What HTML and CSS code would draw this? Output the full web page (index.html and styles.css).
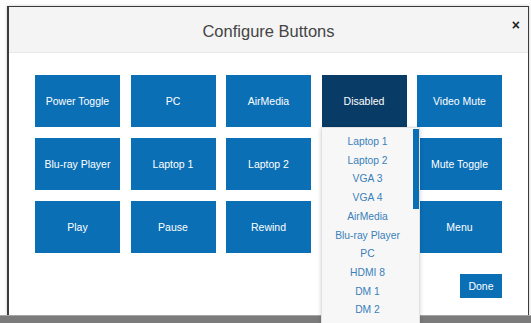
FILE: index.html
```html
<!DOCTYPE html>
<html lang="en">
<head>
  <meta charset="UTF-8" />
  <title>Configure Buttons</title>
  <link rel="stylesheet" href="styles.css">
</head>
<body>
  <div class="page">
    <div class="modal">
      <div class="modal-header">
        <h3>Configure Buttons</h3>
        <span class="close">&times;</span>
      </div>
      <div class="modal-body">
        <div class="grid">
          <div class="btn">Power Toggle</div>
          <div class="btn">PC</div>
          <div class="btn">AirMedia</div>
          <div class="btn dark">Disabled</div>
          <div class="btn">Video Mute</div>
          <div class="btn">Blu-ray Player</div>
          <div class="btn">Laptop 1</div>
          <div class="btn">Laptop 2</div>
          <div class="btn empty"></div>
          <div class="btn">Mute Toggle</div>
          <div class="btn">Play</div>
          <div class="btn">Pause</div>
          <div class="btn">Rewind</div>
          <div class="btn empty"></div>
          <div class="btn">Menu</div>
        </div>
        <div class="actions">
          <div class="done">Done</div>
        </div>
      </div>
    </div>
    <div class="backdrop-bar"></div>

    <div class="dropdown">
      <ul>
        <li>Laptop 1</li>
        <li>Laptop 2</li>
        <li>VGA 3</li>
        <li>VGA 4</li>
        <li>AirMedia</li>
        <li>Blu-ray Player</li>
        <li>PC</li>
        <li>HDMI 8</li>
        <li>DM 1</li>
        <li>DM 2</li>
      </ul>
      <div class="scroll-thumb"></div>
    </div>
  </div>
</body>
</html>
```

FILE: styles.css
```css
* { box-sizing: border-box; }
html, body { margin: 0; height: 100%; }
body { background: #fdfdfd; font-family: "Liberation Sans", Arial, sans-serif; overflow: hidden; }
.page { position: relative; height: 323px; padding: 6px 2px 0 7px; }

.modal { border: 1px solid #3a3a3a; border-left-width: 2px; border-bottom: none; background: #fff; height: 309px; box-shadow: 0 0 3px rgba(0,0,0,0.2); }
.modal-header { position: relative; height: 46px; background: #f4f4f4; border-bottom: 1px solid #e8e8e8; display: flex; align-items: center; justify-content: center; }
.modal-header h3 { margin: 0; font-weight: normal; font-size: 16.5px; color: #444; padding-top: 3px; }
.close { position: absolute; right: 8px; top: 11px; font-size: 14px; font-weight: bold; color: #222; line-height: 14px; }

.modal-body { padding: 22px 0 0 26px; }
.grid { display: grid; grid-template-columns: repeat(5, 85px); grid-auto-rows: 52px; column-gap: 10.5px; row-gap: 11px; }
.btn { background: #0b6fb6; color: #fff; font-size: 10.5px; display: flex; align-items: center; justify-content: center; }
.btn.dark { background: #083b66; }
.btn.empty { background: transparent; }

.actions { width: 467px; display: flex; justify-content: flex-end; margin-top: 21px; }
.done { background: #0b6fb6; color: #fff; font-size: 10.5px; width: 42px; height: 24px; display: flex; align-items: center; justify-content: center; }

.backdrop-bar { position: absolute; left: 0; right: 0; bottom: 0; height: 8px; background: #7b7b7b; border-top: 1px solid #a5a5a5; }

.dropdown { position: absolute; left: 321px; top: 127px; width: 99px; height: 200px; background: #f7f7f7; border: 1px solid #e2e2e2; box-shadow: 0 1px 4px rgba(0,0,0,0.18); }
.dropdown ul { list-style: none; margin: 0; padding: 5px 6px 0 0; }
.dropdown li { text-align: center; font-size: 10.3px; line-height: 18.7px; color: #3a7fba; }
.scroll-thumb { position: absolute; right: 0; top: 1px; width: 6px; height: 80px; background: #0b6fb6; }
```
